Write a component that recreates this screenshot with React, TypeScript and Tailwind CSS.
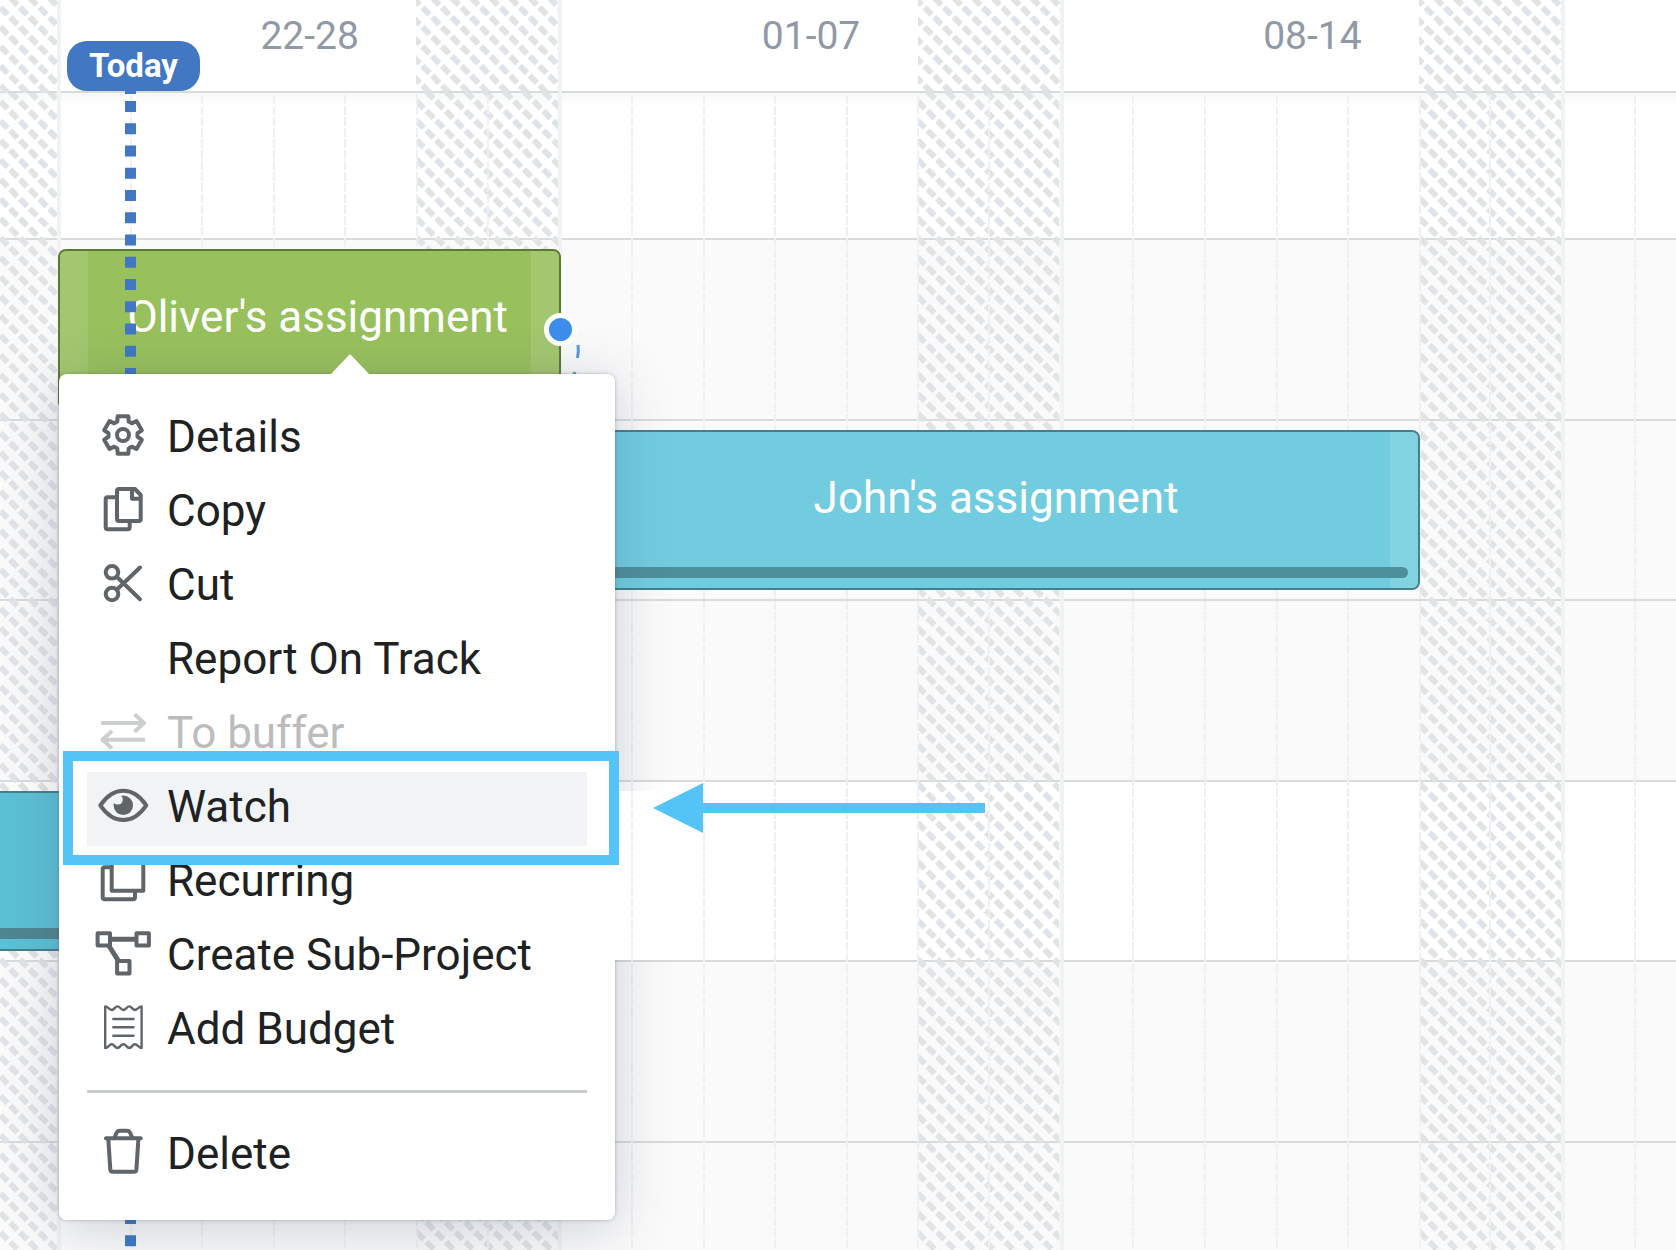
import { useId, type ReactNode } from "react";

const TIMELINE_GRID = "grid grid-cols-[70fr_repeat(22,85fr)_49fr]";

const weeks = ["22-28", "01-07", "08-14"];

function Hatch({ x, y }: { x: number; y: number }) {
  const id = useId();
  return (
    <svg className="h-full w-full" aria-hidden="true">
      <defs>
        <pattern id={id} x={x} y={y} width="39" height="39" patternUnits="userSpaceOnUse">
          <g stroke="#e1e4e7" strokeWidth="6" strokeDasharray="10 3.789" strokeDashoffset="5">
            {[-39, -19.5, 0, 19.5, 39].map((c) => (
              <line key={c} x1={-9.75} y1={-9.75 - c} x2={48.75} y2={48.75 - c} />
            ))}
          </g>
        </pattern>
      </defs>
      <rect width="100%" height="100%" fill={`url(#${id})`} />
    </svg>
  );
}

function DayLine() {
  return (
    <div className="-ml-px w-0.5 bg-[repeating-linear-gradient(to_bottom,transparent_0_2px,#eff0f1_2px_11px)]" />
  );
}

function DayColumns() {
  return (
    <div className={`${TIMELINE_GRID} col-start-1 row-start-1`}>
      <div className="border-r-2 border-[#f0f3f4]">
        <Hatch x={4} y={12} />
      </div>
      {weeks.map((w) => (
        <WeekColumns key={w} />
      ))}
      <div className="border-l-2 border-[#f0f3f4]" />
      <div className="flex">
        <DayLine />
      </div>
    </div>
  );
}

function WeekColumns() {
  return (
    <>
      <div className="border-l-2 border-[#f0f3f4]" />
      {[1, 2, 3, 4].map((d) => (
        <div key={d} className="flex">
          <DayLine />
        </div>
      ))}
      <div className="col-span-2 grid grid-cols-2 border-r-2 border-[#f0f3f4]">
        <div className="col-span-2 col-start-1 row-start-1">
          <Hatch x={13} y={2} />
        </div>
        <div className="col-start-1 row-start-1 flex">
          <DayLine />
        </div>
        <div className="col-start-2 row-start-1 flex">
          <DayLine />
        </div>
      </div>
    </>
  );
}

function Header() {
  return (
    <header className={`${TIMELINE_GRID} h-[93px] border-b-2 border-[#d9dbdb] bg-white`}>
      <div className="border-r-2 border-[#f0f3f4]">
        <Hatch x={4} y={11} />
      </div>
      {weeks.map((w) => (
        <div key={w} className="col-span-7 grid grid-cols-7 border-x-2 border-[#f0f3f4]">
          <div className="col-span-2 col-start-6 row-start-1">
            <Hatch x={10} y={11} />
          </div>
          <div className="col-span-7 col-start-1 row-start-1 pt-3 text-center text-[39px] leading-12 text-[#9299a6]">
            {w}
          </div>
        </div>
      ))}
      <div className="col-span-2 border-l-2 border-[#f0f3f4]" />
    </header>
  );
}

const rowLine = "border-b-2 border-[#d9dbdb]";

function Rows() {
  return (
    <div className="col-start-1 row-start-1 flex flex-col">
      <div className={`${rowLine} h-[147px] bg-linear-to-b from-[#f7f8f8] to-white to-10%`} />
      <div className="grid h-[903px] grid-rows-5">
        <div className={`${rowLine} bg-[#fafafa]`} />
        <div className={`${rowLine} bg-[#fafafa]`} />
        <div className={`${rowLine} bg-[#fafafa]`} />
        <div className={`${rowLine} bg-white`} />
        <div className={`${rowLine} bg-[#fafafa]`} />
      </div>
      <div className="h-[107px] bg-[#fafafa]" />
    </div>
  );
}

function Bars() {
  return (
    <div className="col-start-1 row-start-1 pt-[146px]">
      <div className="grid h-[903px] grid-rows-5">
        <div className={`${TIMELINE_GRID} py-[10px]`}>
          <div className="relative col-span-7 col-start-2 -mx-px flex rounded-lg border-2 border-[#5d7a35] bg-[#98c15d]">
            <div className="w-7 rounded-l-md bg-[#a3c76f]" />
            <div className="flex-1 pt-[42px] pl-4 text-center text-[44px] leading-12 whitespace-nowrap text-white">
              Oliver's assignment
            </div>
            <div className="w-7 rounded-r-md bg-[#a3c76f]" />
            <span className="absolute top-[62px] -right-[18px] size-[33px] rounded-full border-5 border-white bg-[#3d8eec]" />
            <svg className="absolute top-[92px] -right-6 h-10 w-6" viewBox="0 0 24 40" fill="none" stroke="#5a9bdc" strokeWidth="3" aria-hidden="true">
              <path d="M19 2 Q20 8 18.5 15" />
              <path d="M16 29 14 34" />
            </svg>
          </div>
        </div>
        <div className={`${TIMELINE_GRID} py-[10px]`}>
          <div className="relative col-span-12 col-start-9 flex rounded-lg border-2 border-[#447f8c] bg-[#72cce0]">
            <div className="w-7 rounded-l-md bg-[#82d3e2]" />
            <div className="flex-1 pt-[42px] pl-3 text-center text-[44px] leading-12 whitespace-nowrap text-white">
              John's assignment
            </div>
            <div className="w-7 rounded-r-md bg-[#82d3e2]" />
            <span className="absolute inset-x-[10px] bottom-[10px] h-[11px] rounded-full bg-[#4e8f9c]" />
          </div>
        </div>
        <div />
        <div className={`${TIMELINE_GRID} py-[10px]`}>
          <div className="relative col-span-2 col-start-1 border-y-2 border-[#447f8c] bg-[#5cc1d6]">
            <span className="absolute inset-x-0 bottom-[10px] h-[11px] bg-[#4e8791]" />
          </div>
        </div>
      </div>
    </div>
  );
}

const gearPath =
  [0, 1, 2, 3, 4, 5]
    .flatMap((k) =>
      [
        [14.6, -23],
        [19.4, -16],
        [19.4, 16],
        [14.6, 23],
      ].map(([r, a]) => {
        const t = ((k * 60 + a - 90) * Math.PI) / 180;
        return `${(28 + r * Math.cos(t)).toFixed(2)} ${(24 + r * Math.sin(t)).toFixed(2)}`;
      }),
    )
    .map((p, i) => (i === 0 ? "M" : "L") + p)
    .join("") + "Z";

const icons: Record<string, ReactNode> = {
  details: (
    <>
      <path d={gearPath} />
      <circle cx="28" cy="24" r="6" />
    </>
  ),
  copy: (
    <>
      <path d="M24 4H40L45.7 10V34a2 2 0 0 1-2 2H24a2 2 0 0 1-2-2V6a2 2 0 0 1 2-2Z" />
      <path d="M37 5V13.7H45" />
      <path d="M22 12.3H12.7a2 2 0 0 0-2 2V42.2a2 2 0 0 0 2 2H32.7a2 2 0 0 0 2-2V37" />
    </>
  ),
  cut: (
    <>
      <circle cx="17" cy="13.3" r="6.3" />
      <circle cx="17" cy="35" r="6.3" />
      <path d="M45 8.500 22 30.5M45 40.2 22 18" />
    </>
  ),
  buffer: (
    <>
      <path strokeLinecap="butt" d="M6 16H50" />
      <path strokeLinecap="butt" d="M39.5 7.3 49 16 39.5 24.7" />
      <path strokeLinecap="butt" d="M6 32.7H50" />
      <path strokeLinecap="butt" d="M17 24 7.5 32.7 17 41.4" />
    </>
  ),
  watch: (
    <>
      <path d="M5.3 24.3C12 14.5 20 9.7 28.3 9.7S44.6 14.5 51.3 24.3C44.6 34.1 36.6 39 28.3 39S12 34.1 5.3 24.3Z" />
      <circle cx="28.3" cy="24.3" r="9.7" fill="currentColor" stroke="none" />
      <circle cx="22.8" cy="18.6" r="5" fill="#f1f3f4" stroke="none" />
    </>
  ),
  recurring: (
    <>
      <path d="M16.7 4H48.3V35.7H16.7Z" />
      <path d="M16.7 12.3H9.7a2 2 0 0 0-2 2V42.3a2 2 0 0 0 2 2H38a2 2 0 0 0 2-2V36" />
    </>
  ),
  subproject: (
    <>
      <rect x="2.6" y="4.2" width="12.4" height="12.4" />
      <rect x="41.5" y="4.2" width="12.4" height="12.4" />
      <rect x="22.1" y="32" width="12.4" height="12.4" />
      <path strokeWidth="5" strokeLinecap="butt" d="M15 10.3H41M14 17 23.5 32" />
    </>
  ),
  budget: (
    <g strokeWidth="2.4">
      <path d="M10.2 3.4C13 3.4 14 7 16.7 7S20 3.4 22.5 3.4 26 7 28.4 7 32 3.4 34.3 3.4 37.5 7 40 7 44 3.4 46.6 3.4V45C44 45 42.5 41.3 40 41.3S36.8 45 34.3 45 31 41.3 28.4 41.3 25 45 22.5 45 19.2 41.3 16.7 41.3 13 45 10.2 45Z" />
      <path d="M18.3 16H38.5M18.3 24.3H38.5M18.3 32.7H38.5" />
    </g>
  ),
  trash: (
    <>
      <path d="M11 10.3H45.7" />
      <path d="M19.5 9.5 21.5 5Q22.5 2.8 25 2.8H31.7Q34.2 2.8 35.2 5L37.2 9.5" />
      <path d="M13.3 11 15.3 41.5Q15.5 43.7 17.7 43.7H39Q41.2 43.7 41.4 41.5L43.4 11" />
    </>
  ),
};

type Item = { label: string; icon?: string; disabled?: boolean; active?: boolean };

const items: Item[] = [
  { label: "Details", icon: "details" },
  { label: "Copy", icon: "copy" },
  { label: "Cut", icon: "cut" },
  { label: "Report On Track" },
  { label: "To buffer", icon: "buffer", disabled: true },
  { label: "Watch", icon: "watch", active: true },
  { label: "Recurring", icon: "recurring" },
  { label: "Create Sub-Project", icon: "subproject" },
  { label: "Add Budget", icon: "budget" },
];

function MenuItem({ label, icon, disabled, active }: Item) {
  return (
    <li className={active ? "relative z-10" : ""}>
      <button
        type="button"
        disabled={disabled}
        className={`flex h-[74px] w-full items-center gap-4 pb-2 pl-2 text-left text-[44px] leading-12 whitespace-nowrap ${
          disabled ? "text-[#bbbdbd]" : "text-[#202122]"
        } ${active ? "bg-[#f1f3f4]" : ""}`}
      >
        <svg
          viewBox="0 0 56 48"
          className={`h-12 w-14 shrink-0 ${disabled ? "text-[#cbcfd0]" : "text-[#5f6568]"}`}
          fill="none"
          stroke="currentColor"
          strokeWidth="4"
          strokeLinecap="round"
          strokeLinejoin="round"
          aria-hidden="true"
        >
          {icon && icons[icon]}
        </svg>
        <span className="pt-[3px]">{label}</span>
      </button>
      {active && (
        <>
          <span className="pointer-events-none absolute -top-[21px] -right-8 -bottom-[19px] -left-6 border-10 border-[#54c4f7]" />
          <svg className="absolute top-[11px] left-full ml-[66px] h-[50px] w-[332px]" viewBox="0 0 332 50" fill="#54c4f7" aria-hidden="true">
            <path d="M0 25 50 0V20H332V30H50V50Z" />
          </svg>
        </>
      )}
    </li>
  );
}

function ContextMenu() {
  return (
    <div className="absolute top-[374px] left-[59px] w-[556px]">
      <div className="absolute inset-0 rounded-lg shadow-[0_0_3px_1px_rgba(60,70,90,0.22),0_8px_56px_rgba(60,70,100,0.24)] [clip-path:polygon(-100px_-100px,700px_-100px,700px_417px,50%_417px,50%_586px,700px_586px,700px_1000px,-100px_1000px)]" />
      <svg className="absolute -top-5 left-[271px] h-[21px] w-10" viewBox="0 0 40 21" fill="#fff" aria-hidden="true">
        <path d="M0 21 20 0 40 21Z" />
      </svg>
      <div className="relative rounded-lg bg-white p-7 pb-[27px]">
        <ul>
          {items.map((item) => (
            <MenuItem key={item.label} {...item} />
          ))}
        </ul>
        <hr className="mt-[22px] mb-[26px] border-t-3 border-[#c9cccd]" />
        <ul>
          <MenuItem label="Delete" icon="trash" />
        </ul>
      </div>
    </div>
  );
}

function TodayMarker() {
  return (
    <div className="absolute inset-y-0 left-[67px] flex w-[133px] flex-col overflow-hidden pt-[41px]">
      <div className="h-[50px] shrink-0 rounded-[20px] bg-[#4177c3] text-center text-[33px] leading-[50px] font-bold text-white">
        Today
      </div>
      <svg className="ml-[58px] min-h-0 w-[11px] flex-1" aria-hidden="true">
        <line x1="5.5" x2="5.5" y1="0" y2="3000" stroke="#4177c3" strokeWidth="11" strokeDasharray="11 11.24" strokeDashoffset="12.24" />
        <rect width="11" height="3" fill="#4177c3" />
      </svg>
    </div>
  );
}

export default function App() {
  return (
    <main className="relative min-h-screen overflow-hidden bg-[#fafafa] font-[Roboto,sans-serif]">
      <Header />
      <div className="grid">
        <Rows />
        <DayColumns />
        <Bars />
      </div>
      <TodayMarker />
      <ContextMenu />
    </main>
  );
}
